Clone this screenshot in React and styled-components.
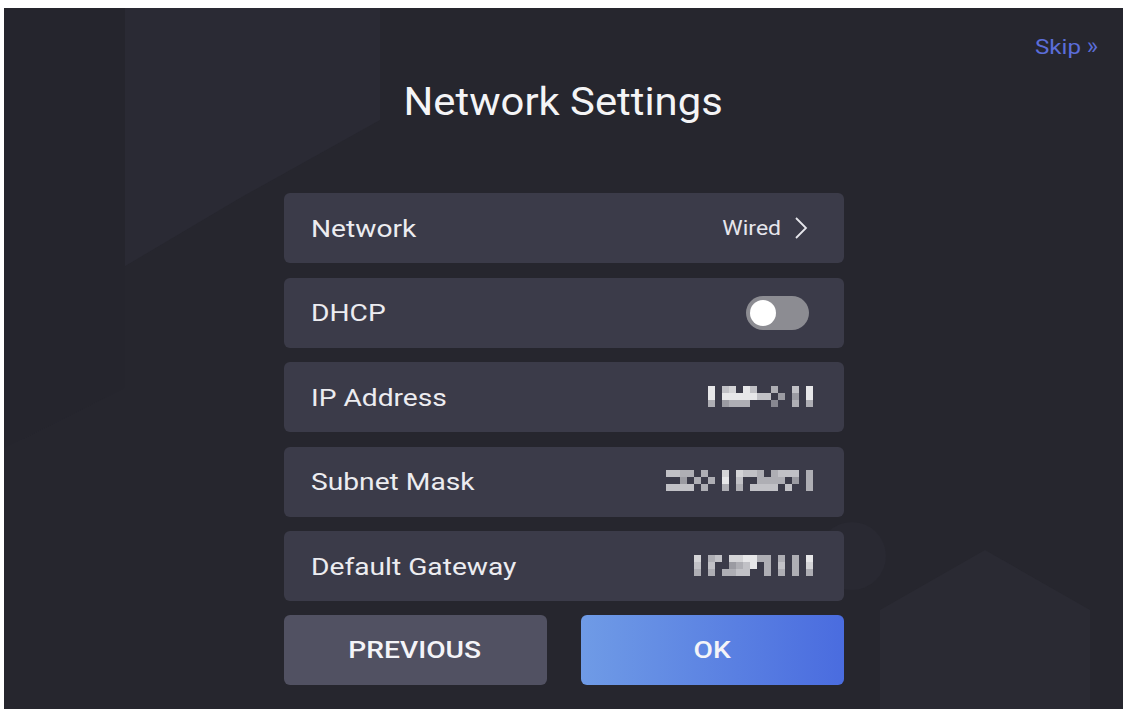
import React, { useState } from 'react'
import styled, { createGlobalStyle } from 'styled-components'

const GlobalStyle = createGlobalStyle`
  html, body {
    margin: 0;
    background: #ffffff;
  }
  body {
    font-family: Roboto, 'Noto Sans', sans-serif;
  }
`

// masked values, one digit per mosaic cell (0/. = empty, 9 = brightest)
const MASKS = {
  ip: ['9.78.97..6..7.9', '9.9999977.5.5.9', '6.5666...4..6.6'],
  mask: ['7766.6..8.8776.6777.6', '..5.6.6.9.7..6666.5.6', '7777.6..6.6.7777.7..6'],
  gateway: ['8.67.889966.6.6.9', '7.7..5679.6.7.6.8', '6.6.6677..6.6.6.6'],
}

const CELL = 7

const Mosaic = ({ rows }) => {
  const cols = rows[0].length
  return (
    <svg width={cols * CELL} height={rows.length * CELL + 2} style={{ display: 'block' }}>
      {rows.map((row, y) =>
        row.split('').map((c, x) => {
          const v = parseInt(c, 10)
          if (!v) return null
          return (
            <rect
              key={`${x}-${y}`}
              x={x * CELL}
              y={y * CELL}
              width={CELL}
              height={CELL}
              fill='#ffffff'
              opacity={(v / 9) * 0.88}
            />
          )
        })
      )}
    </svg>
  )
}

const Chevron = () => (
  <svg width='14' height='24' viewBox='0 0 14 24'>
    <polyline points='2,2 12,12 2,22' fill='none' stroke='#e6e6ec' strokeWidth='1.8' />
  </svg>
)

const Backdrop = () => (
  <BackdropSvg viewBox='0 0 1119 701' preserveAspectRatio='none'>
    <polygon points='121,0 376,0 376,112 236,190 20,318 0,330 0,440 121,380' fill='#2a2a34' />
    <polygon points='0,0 121,0 121,380 0,440' fill='#25252d' />
    <polygon points='876,602 981,542 1086,602 1086,701 876,701' fill='#2a2a33' />
    <circle cx='848' cy='548' r='34' fill='#292932' />
  </BackdropSvg>
)

const App = () => {
  const [dhcp, setDhcp] = useState(false)

  return (
    <>
      <GlobalStyle />
      <Screen>
        <Backdrop />
        <TopBar>
          <Skip>
            <Wide $origin='right'>Skip</Wide>
            <Arrows>»</Arrows>
          </Skip>
        </TopBar>
        <Title>
          <Wide $scale={1.1}>Network Settings</Wide>
        </Title>
        <List>
          <Row>
            <Label>Network</Label>
            <Value>
              <Small>Wired</Small>
              <Chevron />
            </Value>
          </Row>
          <Row>
            <Label>DHCP</Label>
            <Toggle $on={dhcp} onClick={() => setDhcp(!dhcp)}>
              <Knob $on={dhcp} />
            </Toggle>
          </Row>
          <Row>
            <Label>IP Address</Label>
            <Mosaic rows={MASKS.ip} />
          </Row>
          <Row>
            <Label>Subnet Mask</Label>
            <Mosaic rows={MASKS.mask} />
          </Row>
          <Row>
            <Label>Default Gateway</Label>
            <Mosaic rows={MASKS.gateway} />
          </Row>
        </List>
        <Buttons>
          <Button>
            <Wide>PREVIOUS</Wide>
          </Button>
          <Button $primary>
            <Wide>OK</Wide>
          </Button>
        </Buttons>
      </Screen>
    </>
  )
}

const Screen = styled.div`
  position: relative;
  box-sizing: border-box;
  margin: 8px 0 0 4px;
  width: 1119px;
  height: 701px;
  background: #26262e;
  overflow: hidden;
  display: flex;
  flex-direction: column;
  align-items: center;
  padding-top: 24px;
`

const BackdropSvg = styled.svg`
  position: absolute;
  inset: 0;
  width: 100%;
  height: 100%;
`

// the panel's type is set a little wider than the font draws it
const Wide = styled.span`
  display: inline-block;
  transform: scaleX(${p => p.$scale || 1.15});
  transform-origin: ${p => p.$origin || 'center'};
`

const TopBar = styled.div`
  position: relative;
  align-self: stretch;
  display: flex;
  justify-content: flex-end;
  padding-right: 25px;
  height: 30px;
`

const Skip = styled.a`
  display: flex;
  align-items: center;
  gap: 6px;
  color: #5b6dd9;
  font-size: 21px;
  line-height: 30px;
  cursor: pointer;
`

const Arrows = styled.span`
  font-size: 24px;
  line-height: 26px;
  margin-top: -3px;
`

const Title = styled.h1`
  position: relative;
  margin: 17px 0 0;
  font-size: 38px;
  font-weight: 400;
  line-height: 46px;
  color: #f4f4f6;
`

const List = styled.div`
  position: relative;
  margin-top: 68px;
  display: flex;
  flex-direction: column;
  gap: 14.5px;
`

const Row = styled.div`
  box-sizing: border-box;
  width: 560px;
  height: 70px;
  padding: 0 31px 0 27px;
  display: flex;
  align-items: center;
  justify-content: space-between;
  background: #3b3b49;
  border-radius: 6px;
`

const Label = styled(Wide).attrs({ $origin: 'left' })`
  font-size: 24.5px;
  color: #ececf0;
`

const Value = styled.span`
  display: flex;
  align-items: center;
  gap: 12px;
  margin-right: 5px;
`

const Small = styled(Wide).attrs({ $origin: 'right' })`
  font-size: 20px;
  color: #e6e6ec;
`

const Toggle = styled.div`
  position: relative;
  width: 63px;
  height: 34px;
  margin-right: 4px;
  border-radius: 17px;
  background: ${p => (p.$on ? '#4a6ee0' : '#8c8c92')};
  cursor: pointer;
`

const Knob = styled.div`
  position: absolute;
  top: 4px;
  left: ${p => (p.$on ? '33px' : '4px')};
  width: 26px;
  height: 26px;
  border-radius: 50%;
  background: #ffffff;
`

const Buttons = styled.div`
  position: relative;
  margin-top: 13.5px;
  width: 560px;
  display: flex;
  justify-content: space-between;
`

const Button = styled.button`
  width: 263px;
  height: 70px;
  border: none;
  border-radius: 6px;
  font-family: Roboto, sans-serif;
  font-size: 24.5px;
  font-weight: 500;
  color: #f4f4f8;
  background: ${p =>
    p.$primary ? 'linear-gradient(90deg, #6f9be6 0%, #4a6cdf 100%)' : '#515162'};
  cursor: pointer;
`

export default App
